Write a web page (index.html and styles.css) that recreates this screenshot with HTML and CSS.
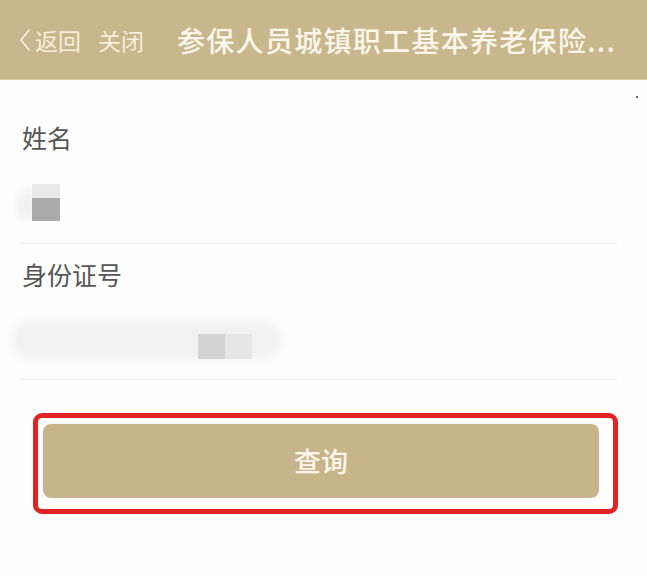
FILE: index.html
```html
<!DOCTYPE html>
<html lang="zh-CN">
<head>
<meta charset="utf-8">
<title>参保人员城镇职工基本养老保险</title>
<link rel="stylesheet" href="styles.css">
</head>
<body>
<header class="topbar">
  <div class="back">
    <svg class="chev" width="12" height="22" viewBox="0 0 12 22"><path d="M10 1 L2 11 L10 21" fill="none" stroke="currentColor" stroke-width="1.8" stroke-linecap="round" stroke-linejoin="round"/></svg>
    <span>返回</span>
  </div>
  <span class="close">关闭</span>
  <h1 class="title">参保人员城镇职工基本养老保险...</h1>
</header>
<span class="dot"></span>
<main class="form">
  <div class="field field-first">
    <div class="label">姓名</div>
    <div class="value">
      <div class="mask mask-name">
        <span class="halo"></span>
        <span class="blk blk-light"></span>
        <span class="blk blk-dark"></span>
      </div>
    </div>
  </div>
  <div class="field">
    <div class="label">身份证号</div>
    <div class="value">
      <div class="mask mask-id">
        <span class="pill"></span>
        <span class="sq sq-dark"></span>
        <span class="sq sq-light"></span>
      </div>
    </div>
  </div>
  <div class="highlight">
    <button class="btn">查询</button>
  </div>
</main>
</body>
</html>
```
FILE: styles.css
```css
* { box-sizing: border-box; }
html, body { margin: 0; padding: 0; }
body {
  width: 647px;
  height: 576px;
  background: #fdfdfd;
  font-family: "Noto Sans CJK SC", "Noto Sans", sans-serif;
  overflow: hidden;
  position: relative;
}
.topbar {
  height: 80px;
  background: #c8b68c;
  border-bottom: 1px solid #d9cba9;
  display: flex;
  align-items: center;
  padding-left: 19px;
  color: #f6eedc;
}
.back {
  display: flex;
  align-items: center;
  font-size: 23px;
  line-height: 30px;
}
.chev { margin-right: 4px; }
.close {
  font-size: 23px;
  line-height: 30px;
  margin-left: 17px;
}
.title {
  margin: 0 0 0 33px;
  font-size: 28px;
  font-weight: 500;
  line-height: 34px;
  letter-spacing: 1.3px;
  color: #fbf6ea;
  white-space: nowrap;
}
.dot {
  position: absolute;
  left: 636px;
  top: 96px;
  width: 2px;
  height: 2px;
  background: #333;
  border-radius: 50%;
}
.form { padding: 0 30px 0 20px; }
.field {
  padding: 14px 0 20px;
  border-bottom: 1px solid #eeeeee;
}
.field-first { padding: 41px 0 21px; }
.label {
  font-size: 25px;
  line-height: 32px;
  color: #555555;
  padding-left: 2px;
}
.value {
  margin-top: 31px;
  height: 38px;
  position: relative;
}
.mask { position: relative; height: 38px; }
.halo {
  position: absolute;
  left: -4px; top: 6px;
  width: 20px; height: 30px;
  border-radius: 50%;
  background: #f2f2f2;
  filter: blur(3px);
}
.blk { position: absolute; left: 12px; width: 28px; }
.blk-light { top: 0; height: 14px; background: #e9e9e9; }
.blk-dark { top: 14px; height: 23px; background: #ababab; }
.pill {
  position: absolute;
  left: -8px; top: 0;
  width: 268px; height: 38px;
  border-radius: 19px;
  background: #f1f1f1;
  filter: blur(4px);
}
.sq { position: absolute; top: 13px; height: 25px; width: 27px; }
.sq-dark { left: 178px; background: #d3d3d3; }
.sq-light { left: 205px; background: #e6e6e6; }
.highlight {
  margin: 33px 0 0 13px;
  width: 585px;
  border: 5px solid #e02424;
  border-radius: 9px;
  padding: 6px 14px 11px 5px;
}
.btn {
  display: block;
  width: 100%;
  height: 74px;
  border: 0;
  border-radius: 8px;
  background: #c7b48a;
  color: #fbf6ea;
  font-family: "Noto Sans CJK SC", sans-serif;
  font-size: 27px;
  font-weight: 500;
  line-height: 74px;
  padding: 0;
}
```
